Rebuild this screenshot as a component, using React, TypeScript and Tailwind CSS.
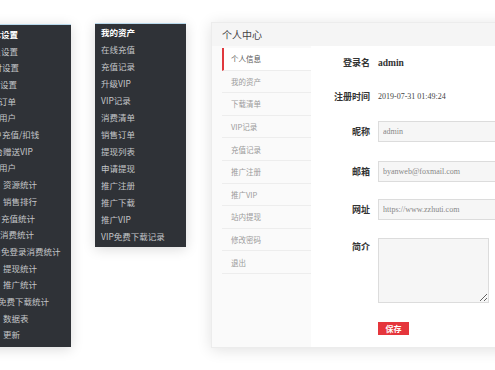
const adminMenu = [
  { text: "基本设置", cls: "pl-[13px] font-bold text-white" },
  { text: "会员设置", cls: "pl-[13px]" },
  { text: "支付设置", cls: "pl-[14px]" },
  { text: "邮件设置", cls: "pl-[12px]" },
  { text: "所有订单", cls: "pl-[11px]" },
  { text: "所有用户", cls: "pl-[11px]" },
  { text: "用户充值/扣钱", cls: "pl-[14px]" },
  { text: "后台赠送VIP", cls: "pl-[15px]" },
  { text: "推广用户", cls: "pl-[11px]" },
  { text: "资源统计", cls: "pl-[32px]" },
  { text: "销售排行", cls: "pl-[32px]" },
  { text: "用户充值统计", cls: "pl-[13px]" },
  { text: "用户消费统计", cls: "pl-[12px]" },
  { text: "用户免登录消费统计", cls: "pl-[13px]" },
  { text: "提现统计", cls: "pl-[32px]" },
  { text: "推广统计", cls: "pl-[32px]" },
  { text: "用户免费下载统计", cls: "pl-[10px]" },
  { text: "数据表", cls: "pl-[32px]" },
  { text: "更新", cls: "pl-[32px]" },
];

const assetMenu = [
  "我的资产",
  "在线充值",
  "充值记录",
  "升级VIP",
  "VIP记录",
  "消费清单",
  "销售订单",
  "提现列表",
  "申请提现",
  "推广注册",
  "推广下载",
  "推广VIP",
  "VIP免费下载记录",
];

const userMenu = [
  "个人信息",
  "我的资产",
  "下载清单",
  "VIP记录",
  "充值记录",
  "推广注册",
  "推广VIP",
  "站内提现",
  "修改密码",
  "退出",
];

function Field({ label, value }: { label: string; value: string }) {
  return (
    <div className="flex items-center">
      <span className="w-[59px] shrink-0 text-right font-bold text-[9px] text-[#333]">{label}</span>
      <input
        readOnly
        value={value}
        className="ml-[8px] w-[150px] shrink-0 h-[21px] pl-[4px] bg-[#f6f6f6] border border-[#dcdcdc] text-[8px] text-[#888] font-['Liberation_Serif',serif] outline-none"
      />
    </div>
  );
}

export default function App() {
  return (
    <div className="w-[495px] h-[370px] overflow-hidden bg-white flex items-start font-['Noto_Sans_CJK_SC',sans-serif]">
      {/* admin settings menu, cut off on the left */}
      <div className="shrink-0 -ml-[29px] mt-[24px] w-[100px] bg-[#2f3237] border-t border-[#b9d9ec] pt-[1px] pb-[4px] shadow-[0_2px_12px_rgba(0,0,0,0.15)] overflow-hidden">
        {adminMenu.map((m) => (
          <div
            key={m.text}
            className={`h-[16.7px] flex items-center whitespace-nowrap text-[8.5px] text-[#c4c6c9] ${m.cls}`}
          >
            {m.text}
          </div>
        ))}
      </div>

      {/* user assets menu */}
      <div className="shrink-0 ml-[24px] mt-[23px] w-[91px] bg-[#2f3237] border-t border-[#b9d9ec] pb-[2px] shadow-[0_2px_12px_rgba(0,0,0,0.15)]">
        {assetMenu.map((m, i) => (
          <div
            key={m}
            className={`h-[17px] flex items-center pl-[6px] whitespace-nowrap text-[8.5px] ${
              i === 0 ? "font-bold text-white" : "text-[#c4c6c9]"
            }`}
          >
            {m}
          </div>
        ))}
      </div>

      {/* personal center card */}
      <div className="shrink-0 ml-[25px] mt-[22px] w-[340px] bg-white border border-[#ececec] shadow-[0_2px_14px_rgba(0,0,0,0.12)]">
        <div className="h-[23px] flex items-center pl-[10px] bg-[#f5f5f5] text-[10px] text-[#444]">
          个人中心
        </div>
        <div className="flex h-[301px]">
          <div className="w-[99px] shrink-0 bg-[#fafafa] pl-[10px] pt-[2px]">
            {userMenu.map((m, i) => (
              <div
                key={m}
                className={`h-[22.6px] flex items-center border-b border-[#ededed] text-[7.5px] ${
                  i === 0
                    ? "border-l-2 border-l-[#e0393e] bg-white pl-[7px] text-[#555]"
                    : "pl-[9px] text-[#9a9a9a]"
                }`}
              >
                {m}
              </div>
            ))}
          </div>

          <div className="flex-1 flex flex-col">
            <div className="mt-[8px] h-[18px] flex items-center">
              <span className="w-[59px] text-right font-bold text-[9px] text-[#333]">登录名</span>
              <span className="ml-[8px] font-bold text-[9.5px] text-[#333] font-['Liberation_Serif',serif]">
                admin
              </span>
            </div>
            <div className="mt-[16px] h-[18px] flex items-center">
              <span className="w-[59px] text-right font-bold text-[9px] text-[#333]">注册时间</span>
              <span className="ml-[8px] text-[8px] text-[#444] font-['Liberation_Serif',serif]">
                2019-07-31 01:49:24
              </span>
            </div>
            <div className="mt-[15px]">
              <Field label="昵称" value="admin" />
            </div>
            <div className="mt-[19px]">
              <Field label="邮箱" value="byanweb@foxmail.com" />
            </div>
            <div className="mt-[17px]">
              <Field label="网址" value="https://www.zzhuti.com" />
            </div>
            <div className="mt-[18px] flex items-start">
              <span className="w-[59px] shrink-0 pt-[2px] text-right font-bold text-[9px] text-[#333]">简介</span>
              <textarea
                readOnly
                className="ml-[8px] w-[111px] h-[65px] bg-[#f6f6f6] border border-[#dcdcdc] outline-none"
              />
            </div>
            <div className="mt-[19px] pl-[67px] flex">
              <button className="w-[31px] h-[13px] bg-[#e5363c] text-white font-bold text-[8px] leading-none">
                保存
              </button>
            </div>
          </div>
        </div>
      </div>
    </div>
  );
}
